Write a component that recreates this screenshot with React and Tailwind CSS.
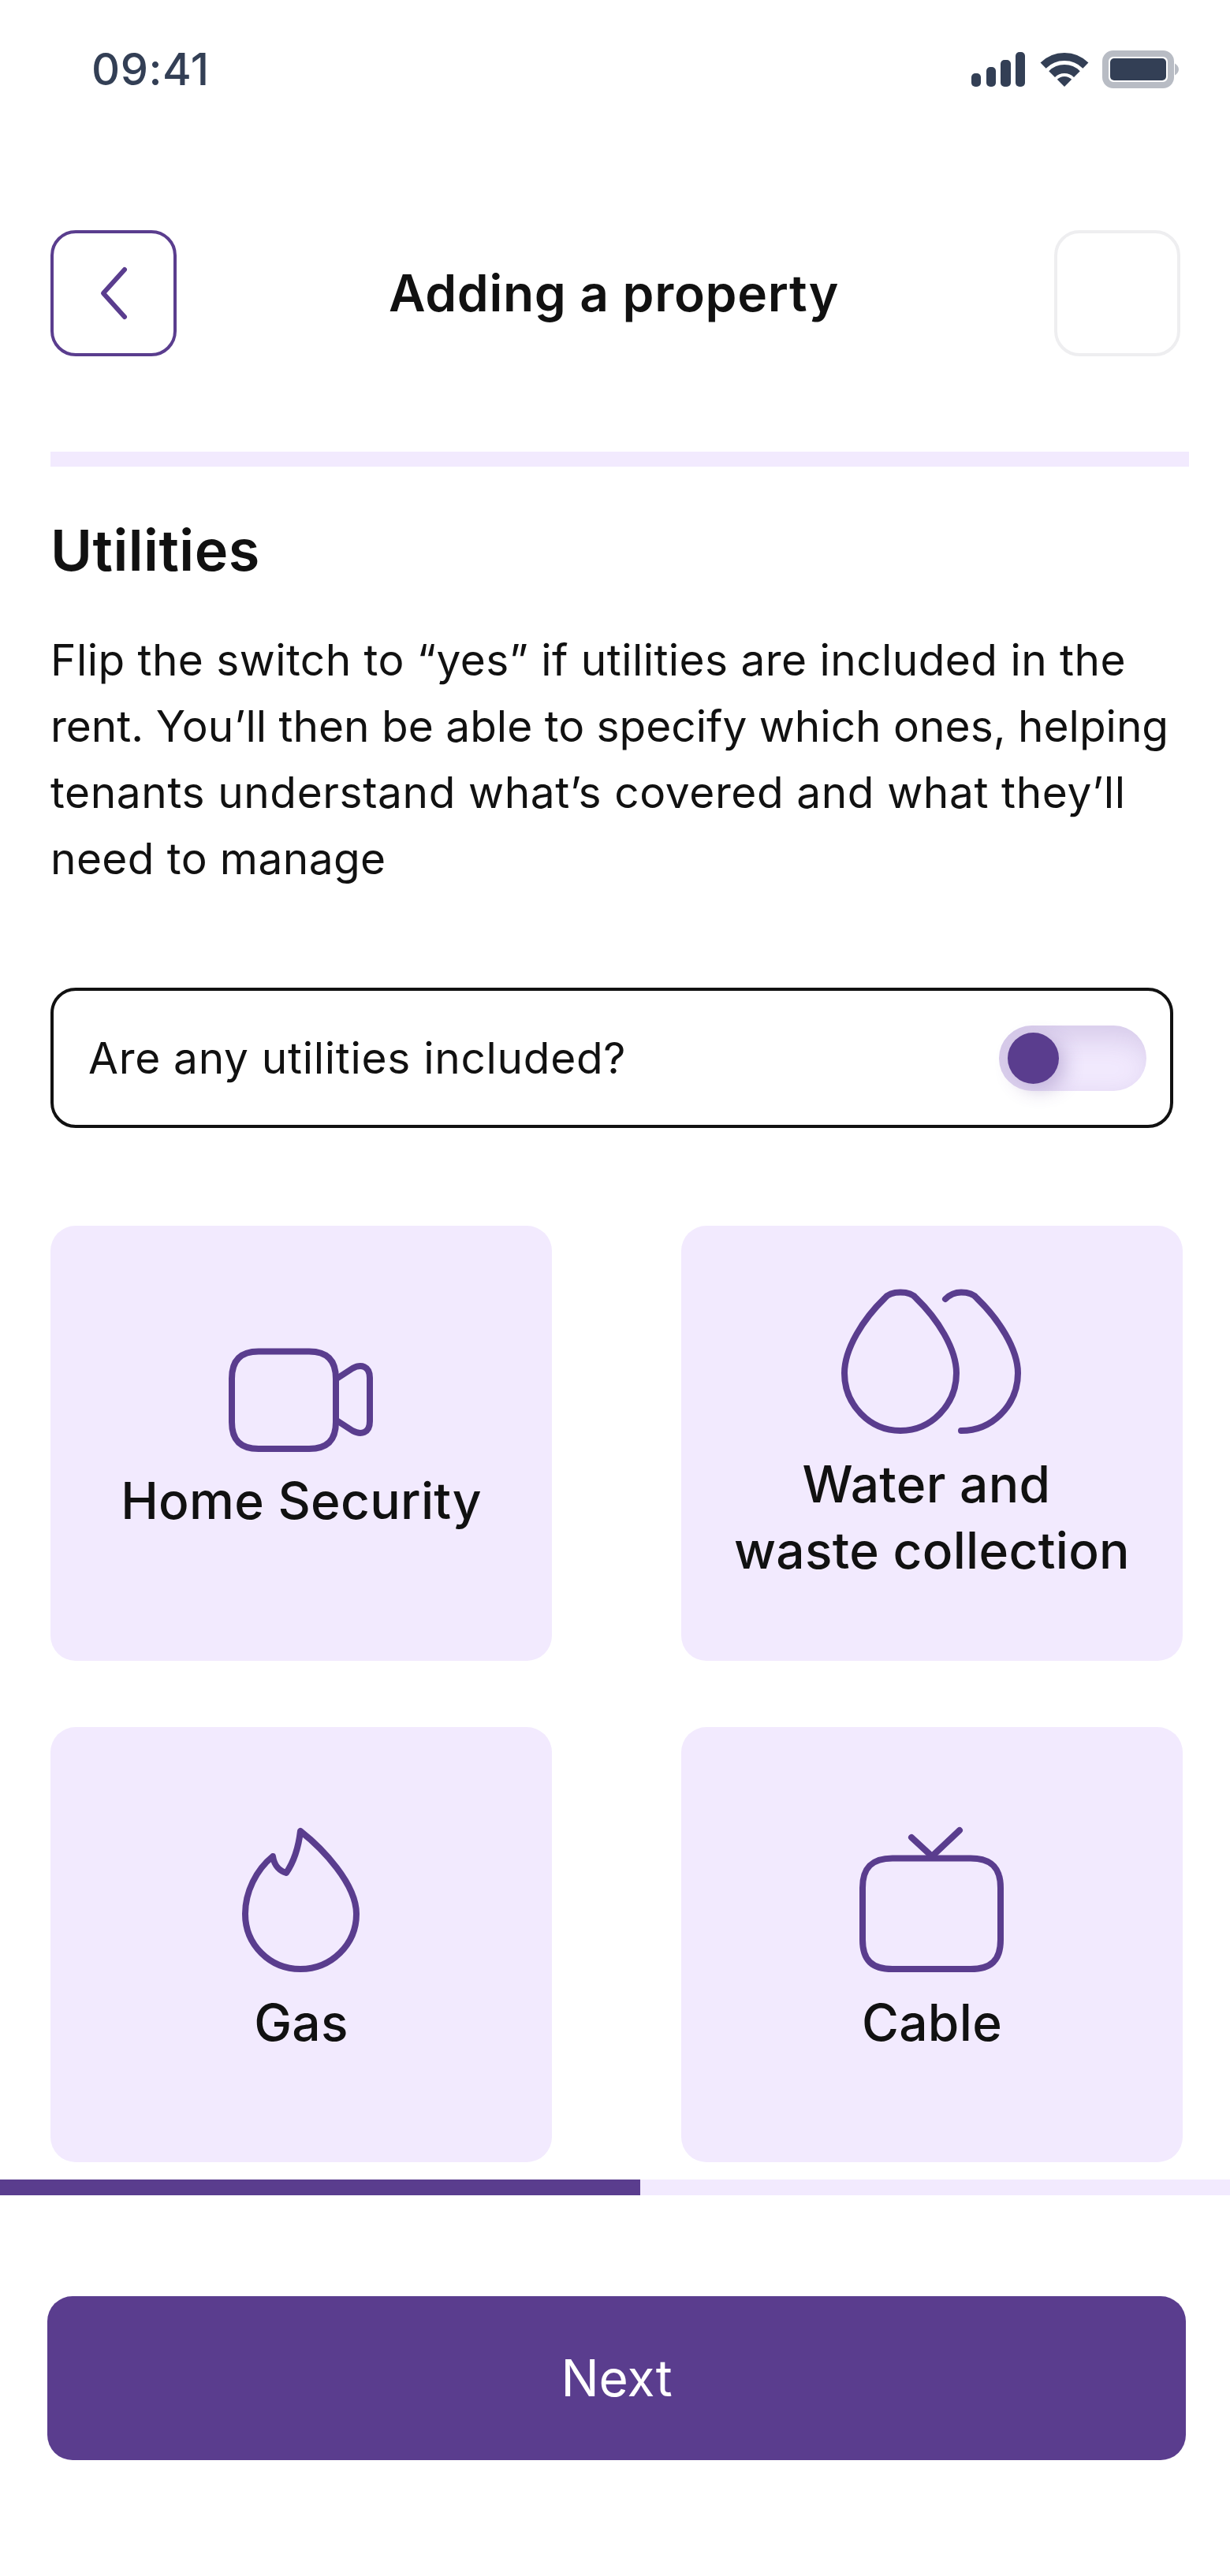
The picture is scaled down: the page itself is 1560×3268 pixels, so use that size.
import { useState } from "react"

const purple = "#5a3d8e"

function Signal() {
  return (
    <svg width="72" height="48" viewBox="0 0 72 48">
      <rect x="2" y="29" width="12" height="17" rx="5" fill="#333f55" />
      <rect x="21" y="21" width="12" height="25" rx="5" fill="#333f55" />
      <rect x="39" y="12" width="13" height="34" rx="5" fill="#333f55" />
      <rect x="58" y="2" width="12" height="44" rx="5" fill="#333f55" />
    </svg>
  )
}

function Wifi() {
  return (
    <svg width="64" height="48" viewBox="118 16 64 48" fill="none">
      <path d="M123.1 35.1A38 38 0 0 1 176.9 35.1" stroke="#333f55" strokeWidth="10" />
      <path d="M134.1 46.1A22.5 22.5 0 0 1 165.9 46.1" stroke="#333f55" strokeWidth="11" />
      <path d="M150 62L140.8 52.8A13 13 0 0 1 159.2 52.8Z" fill="#333f55" />
    </svg>
  )
}

function Battery() {
  return (
    <svg width="98" height="48" viewBox="0 0 98 48" fill="none">
      <rect x="4" y="4" width="83" height="40" rx="10" stroke="#b8bcc4" strokeWidth="8" fill="none" />
      <rect x="10" y="10" width="71" height="28" rx="5" fill="#333f55" />
      <path d="M92 16.500C95 18 97 21 97 24C97 27 95 30 92 31.500Z" fill="#b8bcc4" />
    </svg>
  )
}

function CameraIcon() {
  return (
    <svg width="200" height="148" viewBox="42 100 200 148" fill="none" stroke={purple} strokeWidth="8" strokeLinejoin="round">
      <path d="M88 112.500H152C175 112.500 186 124 186 147V202C186 225 175 236 152 236H88C65 236 54 225 54 202V147C54 124 65 112.500 88 112.500Z" />
      <path d="M187 147L207 134C218 128 229 131 229 146V201C229 216 218 219 207 213L187 200" />
    </svg>
  )
}

function WaterIcon() {
  return (
    <svg width="240" height="192" viewBox="33 30 240 192" fill="none" stroke={purple} strokeWidth="8" strokeLinecap="round">
      <path d="M93 46C97 41 104 38.500 113 38.500C122 38.500 129 41 133 46C160 72 184 110 184 141C184 181 152 214 113 214C74 214 42 181 42 141C42 110 66 72 93 46Z" />
      <path d="M170 47C176 41 183 38.500 190 38.500C199 38.500 206 41 210 46C237 72 262 110 262 141C262 181 230 214 190 214" />
    </svg>
  )
}

function GasIcon() {
  return (
    <svg width="160" height="192" viewBox="33 24 160 192" fill="none" stroke={purple} strokeWidth="8" strokeLinejoin="round">
      <path d="M112 33C110 50 105 70 94 86C87 84 79 78 77 65C56 82 42 110 42 138C42 177 73 208 112 208C151 208 183 177 183 138C183 100 140 55 112 33Z" />
    </svg>
  )
}

function TvIcon() {
  return (
    <svg width="192" height="192" viewBox="26 24 192 192" fill="none" stroke={purple} strokeWidth="8" strokeLinecap="round" strokeLinejoin="round">
      <path d="M72 67.500H171C197 67.500 209 79 209 105V171C209 197 197 208 171 208H72C46 208 34 197 34 171V105C34 79 46 67.500 72 67.500Z" />
      <path d="M96 41L122 65L157 32" />
    </svg>
  )
}

const utilities = [
  { id: "security", icon: <CameraIcon />, label: "Home Security", box: "pb-[14px]", gap: "mt-[12px]" },
  { id: "water", icon: <WaterIcon />, label: <><span className="pr-[14px]">Water and</span><br />waste collection</>, box: "pb-[22px]", gap: "mt-[18px]" },
  { id: "gas", icon: <GasIcon />, label: "Gas", box: "pb-[12px]", gap: "mt-[18px]" },
  { id: "cable", icon: <TvIcon />, label: "Cable", box: "pb-[12px]", gap: "mt-[18px]" },
]

export default function App() {
  const [included] = useState(false)

  return (
    <div className="w-[1560px] h-[3268px] bg-white text-[#111111] font-['Inter','Liberation_Sans',sans-serif] flex flex-col">
      {/* Status bar */}
      <div className="h-[128px] pt-[48px] pl-[116px] pr-[64px] flex items-start justify-between">
        <span className="text-[56px] leading-[80px] font-medium tracking-[0.5px] text-[#333f55]">09:41</span>
        <div className="flex items-center gap-[16px] pt-[16px]">
          <Signal />
          <Wifi />
          <Battery />
        </div>
      </div>

      {/* Header */}
      <div className="mt-[164px] pl-[64px] pr-[63px] flex items-center justify-between">
        <button className="w-[160px] h-[160px] rounded-[32px] border-4 border-[#5a3d8e] flex items-center justify-center">
          <svg width="40" height="72" viewBox="0 0 40 72" fill="none" stroke={purple} strokeWidth="6" strokeLinecap="round" strokeLinejoin="round">
            <path d="M34 6L7 36L34 66" />
          </svg>
        </button>
        <h1 className="text-[64px] leading-[96px] font-semibold tracking-[0.7px] pr-[4px]">Adding a property</h1>
        <div className="w-[160px] h-[160px] rounded-[32px] border-4 border-[#eeeef0]" />
      </div>

      <div className="mt-[121px] mx-[64px] w-[1444px] h-[19px] bg-[#f2eafe]" />

      {/* Intro */}
      <div className="pl-[64px] pr-[64px]">
        <h2 className="mt-[58px] text-[72px] leading-[96px] font-semibold tracking-[0.5px]">Utilities</h2>
        <p className="mt-[49px] text-[55px] leading-[84px]">
          <span className="block whitespace-nowrap tracking-[0.44px]">Flip the switch to “yes” if utilities are included in the</span>
          <span className="block whitespace-nowrap">rent. You’ll then be able to specify which ones, helping</span>
          <span className="block whitespace-nowrap tracking-[0.6px]">tenants understand what’s covered and what they’ll</span>
          <span className="block whitespace-nowrap tracking-[0.4px]">need to manage</span>
        </p>
      </div>

      {/* Toggle */}
      <div className="mt-[122px] ml-[64px] w-[1424px] h-[178px] rounded-[32px] border-4 border-[#111111] pl-[44px] pr-[30px] flex items-center justify-between">
        <span className="text-[55px] leading-[84px] tracking-[0.7px]">Are any utilities included?</span>
        <div className="w-[187px] h-[83px] rounded-full bg-[#f2eafe] flex items-center pl-[11px] shadow-[inset_14px_14px_40px_rgba(90,61,142,0.2)]">
          <div className={`w-[65px] h-[65px] rounded-full bg-[#5a3d8e] shadow-[8px_8px_24px_rgba(90,61,142,0.3)] ${included ? "ml-[100px]" : ""}`} />
        </div>
      </div>

      {/* Utilities grid */}
      <div className="mt-[124px] ml-[64px] grid grid-cols-[636px_636px] gap-x-[164px] gap-y-[84px]">
        {utilities.map((item) => (
          <div key={item.id} className={`h-[552px] rounded-[32px] bg-[#f2eafe] flex flex-col items-center justify-center ${item.box}`}>
            {item.icon}
            <div className={`${item.gap} text-[64px] leading-[84px] font-[540] tracking-[0.3px] text-center`}>{item.label}</div>
          </div>
        ))}
      </div>

      {/* Progress */}
      <div className="mt-[22px] h-[20px] bg-[#f2eafe]">
        <div className="h-full w-[812px] bg-[#5a3d8e]" />
      </div>

      <div className="mt-[128px] pl-[60px]">
        <button className="w-[1444px] h-[208px] rounded-[32px] bg-[#5a3d8e] text-white text-[64px] leading-[96px]">Next</button>
      </div>
    </div>
  )
}
